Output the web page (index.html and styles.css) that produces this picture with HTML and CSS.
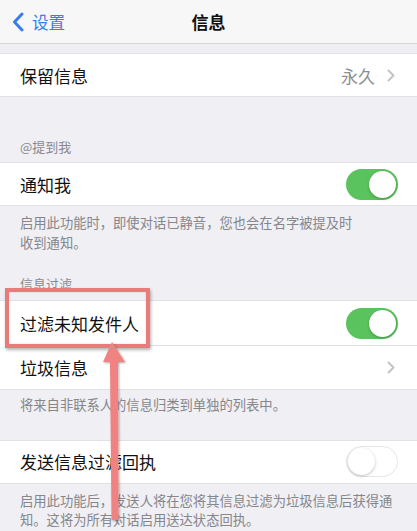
FILE: index.html
```html
<!DOCTYPE html>
<html lang="zh-CN">
<head>
<meta charset="utf-8">
<title>信息</title>
<link rel="stylesheet" href="styles.css">
</head>
<body>
<div class="screen">
  <header class="nav">
    <div class="back">
      <svg class="back-icon" width="12" height="20" viewBox="0 0 12 20"><path d="M10 2 L2.5 10 L10 18" fill="none" stroke="#3a7bef" stroke-width="3" stroke-linecap="round" stroke-linejoin="round"/></svg>
      <span>设置</span>
    </div>
    <div class="title">信息</div>
    <div></div>
  </header>

  <div class="gap-top"></div>
  <section class="group">
    <div class="row">
      <span>保留信息</span>
      <span class="detail">永久<svg class="chev" width="8" height="13" viewBox="0 0 8 13"><path d="M1.5 1.5 L6.5 6.5 L1.5 11.5" fill="none" stroke="#c4c4c8" stroke-width="2" stroke-linecap="round" stroke-linejoin="round"/></svg></span>
    </div>
  </section>

  <div class="header h1">@提到我</div>
  <section class="group">
    <div class="row">
      <span>通知我</span>
      <span class="toggle on"><span class="knob"></span></span>
    </div>
  </section>
  <div class="footer f1">启用此功能时，即使对话已静音，您也会在名字被提及时<br>收到通知。</div>

  <div class="header h2">信息过滤</div>
  <section class="group">
    <div class="row tall">
      <span>过滤未知发件人</span>
      <span class="toggle on"><span class="knob"></span></span>
    </div>
    <div class="row tall sep">
      <span>垃圾信息</span>
      <svg class="chev" width="8" height="13" viewBox="0 0 8 13"><path d="M1.5 1.5 L6.5 6.5 L1.5 11.5" fill="none" stroke="#c4c4c8" stroke-width="2" stroke-linecap="round" stroke-linejoin="round"/></svg>
    </div>
  </section>
  <div class="footer f2">将来自非联系人的信息归类到单独的列表中。</div>

  <section class="group">
    <div class="row">
      <span>发送信息过滤回执</span>
      <span class="toggle off"><span class="knob"></span></span>
    </div>
  </section>
  <div class="footer f3">启用此功能后，发送人将在您将其信息过滤为垃圾信息后获得通<br>知。这将为所有对话启用送达状态回执。</div>

  <div class="mark-box"></div>
  <svg class="mark-arrow" width="40" height="200" viewBox="0 0 40 200">
    <defs>
      <filter id="sh" x="-50%" y="-10%" width="200%" height="120%">
        <feDropShadow dx="1" dy="1" stdDeviation="1.2" flood-color="#000" flood-opacity="0.35"/>
      </filter>
    </defs>
    <polygon filter="url(#sh)" fill="#f08282" points="12,4 3,24 10,24 11.5,182 18.5,182 18,24 25,24"/>
  </svg>
</div>
</body>
</html>
```

FILE: styles.css
```css
* { box-sizing: border-box; }
html, body { margin: 0; padding: 0; }
body {
  background: #efeff4;
  font-family: "Noto Sans CJK SC", "Noto Sans", sans-serif;
  color: #111;
}
.screen {
  position: relative;
  width: 417px;
  height: 531px;
  overflow: hidden;
}
.nav {
  height: 44px;
  background: #f7f7f7;
  border-bottom: 1px solid #d6d6da;
  display: grid;
  grid-template-columns: 1fr auto 1fr;
  align-items: center;
}
.back {
  display: flex;
  align-items: center;
  gap: 8px;
  padding-left: 12px;
  color: #3a7bef;
  font-size: 16.5px;
}
.back-icon { display: block; }
.title {
  font-size: 17px;
  font-weight: 600;
  color: #111;
}
.gap-top { height: 9px; }
.group {
  background: #fff;
  border-top: 1px solid #e2e2e6;
  border-bottom: 1px solid #e2e2e6;
}
.row {
  height: 42px;
  padding: 0 20px;
  display: flex;
  align-items: center;
  justify-content: space-between;
  font-size: 17px;
  position: relative;
}
.row.tall { height: 44px; }
.row.sep::before {
  content: "";
  position: absolute;
  left: 20px;
  right: 0;
  top: 0;
  border-top: 1px solid #e2e2e6;
}
.detail {
  display: flex;
  align-items: center;
  gap: 12px;
  color: #8e8e93;
  font-size: 17px;
}
.chev { display: block; margin-right: 2px; }
.header {
  padding: 0 20px;
  font-size: 13px;
  line-height: 18px;
  color: #8a8a8e;
}
.h1 { padding-top: 41px; padding-bottom: 6px; }
.h2 { padding-top: 23px; padding-bottom: 7px; }
.footer {
  padding: 0 20px;
  font-size: 13.3px;
  line-height: 19.5px;
  color: #86868b;
  white-space: nowrap;
}
.f1 { padding-top: 7px; }
.f2 { padding-top: 5px; margin-bottom: 25px; }
.f3 { padding-top: 7px; }
.toggle {
  width: 52px;
  height: 31px;
  border-radius: 16px;
  position: relative;
  display: block;
  margin-right: -1px;
}
.toggle.on { background: #5bc35d; }
.toggle.off { background: #fff; border: 1.5px solid #e6e6e9; }
.knob {
  position: absolute;
  top: 2px;
  width: 27px;
  height: 27px;
  border-radius: 50%;
  background: #fff;
  box-shadow: 0 1px 3px rgba(0,0,0,0.25);
}
.toggle.on .knob { right: 2px; }
.toggle.off .knob { left: 0.5px; top: 0.5px; }
.mark-box {
  position: absolute;
  left: 5px;
  top: 288px;
  width: 145px;
  height: 60px;
  border: 4px solid #ea7b7b;
  box-shadow: 1px 2px 3px rgba(0,0,0,0.3), inset 0 0 2px rgba(0,0,0,0.15);
}
.mark-arrow {
  position: absolute;
  left: 100px;
  top: 338px;
}
```
